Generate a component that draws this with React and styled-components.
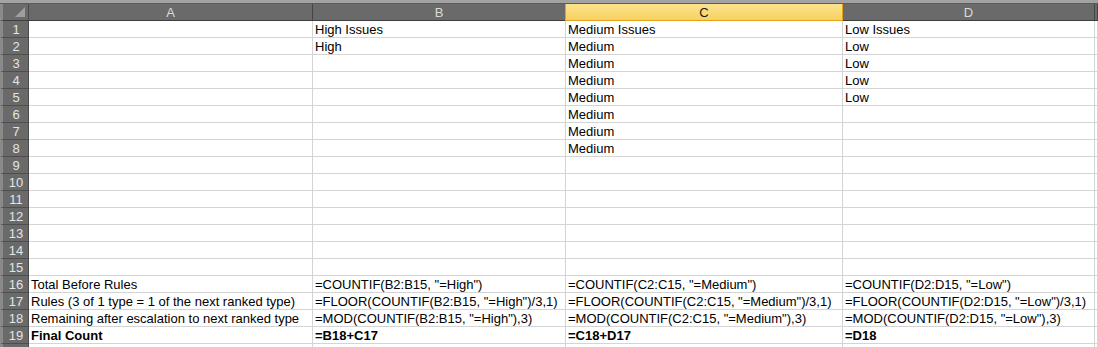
import React from "react";
import styled, { createGlobalStyle } from "styled-components";

const GlobalStyle = createGlobalStyle`
  body {
    margin: 0;
    background: #ffffff;
    font-family: "Liberation Sans", Arial, sans-serif;
  }
`;

const COLS = ["A", "B", "C", "D", ""];
const SELECTED = "C";

const rows = [
  ["", "High Issues", "Medium Issues", "Low Issues"],
  ["", "High", "Medium", "Low"],
  ["", "", "Medium", "Low"],
  ["", "", "Medium", "Low"],
  ["", "", "Medium", "Low"],
  ["", "", "Medium", ""],
  ["", "", "Medium", ""],
  ["", "", "Medium", ""],
  ["", "", "", ""],
  ["", "", "", ""],
  ["", "", "", ""],
  ["", "", "", ""],
  ["", "", "", ""],
  ["", "", "", ""],
  ["", "", "", ""],
  [
    "Total Before Rules",
    '=COUNTIF(B2:B15, "=High")',
    '=COUNTIF(C2:C15, "=Medium")',
    '=COUNTIF(D2:D15, "=Low")',
  ],
  [
    "Rules (3 of 1 type = 1 of the next ranked type)",
    '=FLOOR(COUNTIF(B2:B15, "=High")/3,1)',
    '=FLOOR(COUNTIF(C2:C15, "=Medium")/3,1)',
    '=FLOOR(COUNTIF(D2:D15, "=Low")/3,1)',
  ],
  [
    "Remaining after escalation to next ranked type",
    '=MOD(COUNTIF(B2:B15, "=High"),3)',
    '=MOD(COUNTIF(C2:C15, "=Medium"),3)',
    '=MOD(COUNTIF(D2:D15, "=Low"),3)',
  ],
  ["Final Count", "=B18+C17", "=C18+D17", "=D18"],
  ["", "", "", ""],
];

const Sheet = styled.div`
  width: 1098px;
  overflow: hidden;
`;

const TopStrip = styled.div`
  height: 3px;
  background: #a3a3a3;
  border-bottom: 1px solid #5c5c5c;
`;

const Grid = styled.div`
  display: grid;
  grid-template-columns: 29px 284px 253px 277px 252px 1fr;
  grid-auto-rows: 17px;
`;

const Corner = styled.div`
  background: #6a6a6a;
  border-right: 1px solid #4a4a4a;
  border-bottom: 1px solid #3e3e3e;
  border-left: 3px solid #8a8a8a;
  position: relative;

  &::after {
    content: "";
    position: absolute;
    right: 3px;
    bottom: 3px;
    border-left: 10px solid transparent;
    border-bottom: 10px solid #9e9e9e;
  }
`;

const ColHead = styled.div`
  background: ${(p) =>
    p.$active ? "linear-gradient(#fbe38f, #f8d260)" : "#6a6a6a"};
  color: ${(p) => (p.$active ? "#1a1a1a" : "#dadada")};
  border-right: 1px solid ${(p) => (p.$active ? "#e2a21c" : "#454545")};
  border-left: ${(p) => (p.$active ? "1px solid #e2a21c" : "none")};
  border-bottom: 1px solid ${(p) => (p.$active ? "#e2a21c" : "#3e3e3e")};
  margin-left: ${(p) => (p.$active ? "-1px" : "0")};
  font-size: 13px;
  line-height: 15px;
  padding-top: 1px;
  text-align: center;
`;

const RowHead = styled.div`
  background: #6a6a6a;
  color: #e4e4e4;
  border-left: 3px solid #8a8a8a;
  border-right: 1px solid #4a4a4a;
  border-bottom: 1px solid #4e4e4e;
  font-size: 13px;
  line-height: 15px;
  padding-top: 1px;
  text-align: center;
  padding-left: 1px;
`;

const Cell = styled.div`
  border-right: 1px solid #d4d4d4;
  border-bottom: 1px solid #d4d4d4;
  color: #000;
  font-size: 13px;
  line-height: 15px;
  padding-top: 1px;
  padding-left: 2px;
  white-space: nowrap;
  overflow: hidden;
  font-weight: ${(p) => (p.$bold ? 700 : 400)};
`;

export default function App() {
  return (
    <>
      <GlobalStyle />
      <Sheet>
        <TopStrip />
        <Grid>
          <Corner />
          {COLS.map((c, i) => (
            <ColHead key={i} $active={c === SELECTED}>
              {c}
            </ColHead>
          ))}
          {rows.map((r, ri) => {
            const bold = ri === 18;
            const last = ri === rows.length - 1;
            return (
              <React.Fragment key={ri}>
                <RowHead>{last ? "" : ri + 1}</RowHead>
                {r.map((v, ci) => (
                  <Cell key={ci} $bold={bold}>
                    {v}
                  </Cell>
                ))}
                <Cell />
              </React.Fragment>
            );
          })}
        </Grid>
      </Sheet>
    </>
  );
}
